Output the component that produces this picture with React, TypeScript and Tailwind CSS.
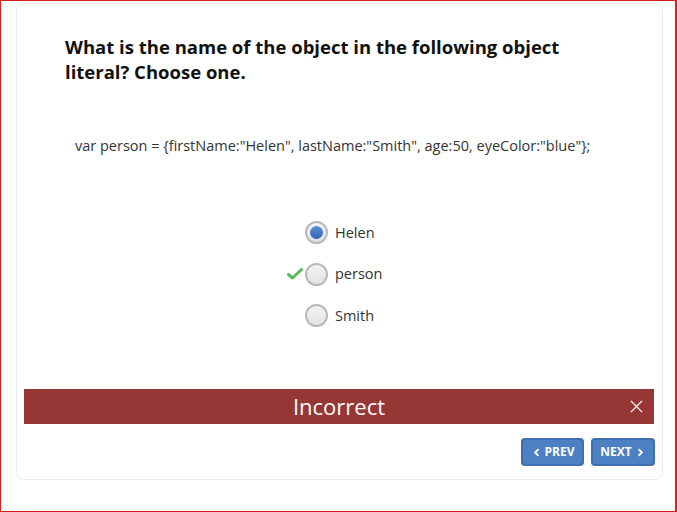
import { X, ChevronLeft, ChevronRight } from "lucide-react";

const options = [
  { label: "Helen", selected: true, correct: false },
  { label: "person", selected: false, correct: true },
  { label: "Smith", selected: false, correct: false },
];

function Radio({ selected }: { selected: boolean }) {
  return (
    <span className="relative flex h-[23px] w-[23px] items-center justify-center rounded-full border-2 border-[#b9b9b9] bg-gradient-to-b from-[#f4f4f4] to-[#e2e2e2]">
      {selected && <span className="h-[13px] w-[13px] rounded-full bg-gradient-to-b from-[#5a8fd6] to-[#2f64b4]" />}
    </span>
  );
}

export default function App() {
  return (
    <div
      className="h-[512px] w-[677px] overflow-hidden border border-r-2 border-[#d42020] bg-white"
      style={{ fontFamily: '"Open Sans", "Noto Sans", sans-serif' }}
    >
      <div className="ml-[15px] mt-[2px] flex h-[477px] w-[647px] flex-col rounded-[8px] border border-[#ececec] bg-white">
        <h1 className="ml-[48px] mt-[30px] w-[540px] text-[18.5px] font-bold leading-[25px] text-[#111]">
          What is the name of the object in the following object literal? Choose one.
        </h1>
        <p className="ml-[58px] mt-[52px] text-[14.5px] leading-[20px] text-[#333]">
          var person = {"{"}firstName:"Helen", lastName:"Smith", age:50, eyeColor:"blue"{"}"};
        </p>
        <div className="mt-[65px] flex flex-col gap-[18.5px] pl-[288px]">
          {options.map((o) => (
            <div key={o.label} className="relative flex items-center gap-[7px]">
              {o.correct && (
                <svg className="absolute left-[-18px] top-[5px]" width="16" height="12" viewBox="0 0 16 12">
                  <path d="M1.5 6.5 L5.5 10 L14.5 1.5" fill="none" stroke="#5cb85c" strokeWidth="3" strokeLinecap="round" strokeLinejoin="round" />
                </svg>
              )}
              <Radio selected={o.selected} />
              <span className="text-[14.5px] text-[#333]">{o.label}</span>
            </div>
          ))}
        </div>
        <div className="relative ml-[7px] mr-[8px] mt-[62px] flex h-[35px] items-center justify-center bg-[#973735]">
          <span className="text-[22px] text-white">Incorrect</span>
          <X className="absolute right-[7px] top-[7px] text-white" size={21} strokeWidth={1.3} />
        </div>
        <div className="mr-[7px] mt-[14px] flex justify-end gap-[7px]">
          <button className="flex h-[28px] w-[63px] items-center justify-center gap-[3px] rounded-[4px] border-2 border-[#3f6fac] bg-[#4b80c2] text-[12px] font-bold text-white">
            <ChevronLeft size={11} strokeWidth={4} />
            PREV
          </button>
          <button className="flex h-[28px] w-[64px] items-center justify-center gap-[3px] rounded-[4px] border-2 border-[#3f6fac] bg-[#4b80c2] text-[12px] font-bold text-white">
            NEXT
            <ChevronRight size={11} strokeWidth={4} />
          </button>
        </div>
      </div>
    </div>
  );
}
